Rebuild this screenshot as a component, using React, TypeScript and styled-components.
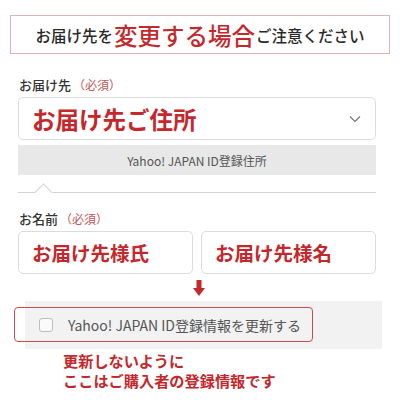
import React from 'react';
import styled, { createGlobalStyle } from 'styled-components';

const GlobalStyle = createGlobalStyle`
  body {
    margin: 0;
    background: #fff;
    font-family: "Noto Sans CJK JP", "Noto Sans", sans-serif;
  }
`;

const RED = '#c4282d';

const Page = styled.div`
  width: 400px;
  height: 400px;
  overflow: hidden;
  display: flex;
  flex-direction: column;
`;

const Banner = styled.div`
  margin: 15px 10px 0;
  height: 37px;
  border: 1px solid #dcb3b6;
  display: flex;
  align-items: center;
  justify-content: center;
  color: #2a2a2a;
  font-size: 15.5px;
  font-weight: 500;
  white-space: nowrap;
`;

const BannerEmphasis = styled.span`
  color: ${RED};
  font-size: 23.5px;
  font-weight: 500;
  margin: 0 1px;
`;

const Form = styled.div`
  padding: 0 24px 0 18px;
  display: flex;
  flex-direction: column;
`;

const FieldLabel = styled.div<{ $top: number }>`
  margin-top: ${({ $top }) => $top}px;
  padding-left: 1px;
  font-size: 13px;
  line-height: 18px;
  font-weight: 500;
  color: #333;
`;

const Required = styled.span`
  color: #c0585a;
  font-size: 12px;
  font-weight: 400;
  margin-left: 2px;
`;

const SelectBox = styled.div`
  margin-top: 3px;
  height: 41px;
  border: 1px solid #dcdcdc;
  border-radius: 5px;
  display: flex;
  align-items: center;
  justify-content: space-between;
  padding: 0 14px 0 13px;
`;

const BigRed = styled.span<{ $size: number }>`
  color: ${RED};
  font-size: ${({ $size }) => $size}px;
  font-weight: 700;
  white-space: nowrap;
`;

const InfoBar = styled.div`
  margin-top: 5px;
  height: 30px;
  background: #e8e8e8;
  display: flex;
  align-items: center;
  justify-content: center;
  color: #555;
  font-size: 12px;
`;

const NotchLine = styled.div`
  position: relative;
  margin-top: 7px;
  height: 10px;
  border-bottom: 1px solid #d2d2d2;

  &::after {
    content: '';
    position: absolute;
    left: 19px;
    bottom: -7px;
    width: 12px;
    height: 12px;
    background: #fff;
    border-top: 1px solid #d2d2d2;
    border-left: 1px solid #d2d2d2;
    transform: rotate(45deg);
  }
`;

const NameRow = styled.div`
  margin-top: 3px;
  display: grid;
  grid-template-columns: 1fr 1fr;
  gap: 8px;
`;

const NameInput = styled.div`
  height: 41px;
  border: 1px solid #dcdcdc;
  border-radius: 5px;
  display: flex;
  align-items: center;
  padding-left: 13px;
`;

const ArrowWrap = styled.div`
  margin-top: 6px;
  height: 16px;
  display: flex;
  justify-content: center;
  padding-left: 3px;
`;

const UpdatePanel = styled.div`
  margin: 5px 18px 0 25px;
  height: 48px;
  background: #f2f2f2;
  padding-top: 6px;
  box-sizing: border-box;
`;

const HighlightBox = styled.label`
  margin-left: -11px;
  width: 299px;
  height: 35px;
  box-sizing: border-box;
  border: 1.5px solid #cf4a4e;
  border-radius: 4px;
  display: flex;
  align-items: center;
  gap: 15px;
  padding-left: 24px;
  color: #555;
  font-size: 14px;
  white-space: nowrap;
`;

const CheckBox = styled.span`
  width: 12px;
  height: 12px;
  border: 1px solid #bdbdbd;
  border-radius: 3px;
  background: #fafafa;
  flex-shrink: 0;
`;

const Notes = styled.div`
  margin-top: 1px;
  padding-left: 63px;
  display: flex;
  flex-direction: column;
`;

const NoteLine = styled.div`
  color: ${RED};
  font-size: 15.2px;
  line-height: 20px;
  font-weight: 700;
  white-space: nowrap;
`;

const Chevron = () => (
  <svg width="12" height="8" viewBox="0 0 12 8">
    <path d="M1 1.5 L6 6.5 L11 1.5" fill="none" stroke="#777" strokeWidth="1.2" />
  </svg>
);

const DownArrow = () => (
  <svg width="12" height="16" viewBox="0 0 12 16">
    <path d="M3.5 0 H8.5 V8 H12 L6 16 L0 8 H3.5 Z" fill={RED} />
  </svg>
);

export default function App() {
  return (
    <Page>
      <GlobalStyle />
      <Banner>
        お届け先を<BannerEmphasis>変更する場合</BannerEmphasis>ご注意ください
      </Banner>

      <Form>
        <FieldLabel $top={22}>
          お届け先<Required>（必須）</Required>
        </FieldLabel>
        <SelectBox>
          <BigRed $size={23.5}>お届け先ご住所</BigRed>
          <Chevron />
        </SelectBox>
        <InfoBar>Yahoo! JAPAN ID登録住所</InfoBar>
        <NotchLine />

        <FieldLabel $top={17}>
          お名前<Required>（必須）</Required>
        </FieldLabel>
        <NameRow>
          <NameInput>
            <BigRed $size={19.5}>お届け先様氏</BigRed>
          </NameInput>
          <NameInput>
            <BigRed $size={19.5}>お届け先様名</BigRed>
          </NameInput>
        </NameRow>
        <ArrowWrap>
          <DownArrow />
        </ArrowWrap>
      </Form>

      <UpdatePanel>
        <HighlightBox>
          <CheckBox />
          Yahoo! JAPAN ID登録情報を更新する
        </HighlightBox>
      </UpdatePanel>

      <Notes>
        <NoteLine>更新しないように</NoteLine>
        <NoteLine>ここはご購入者の登録情報です</NoteLine>
      </Notes>
    </Page>
  );
}
